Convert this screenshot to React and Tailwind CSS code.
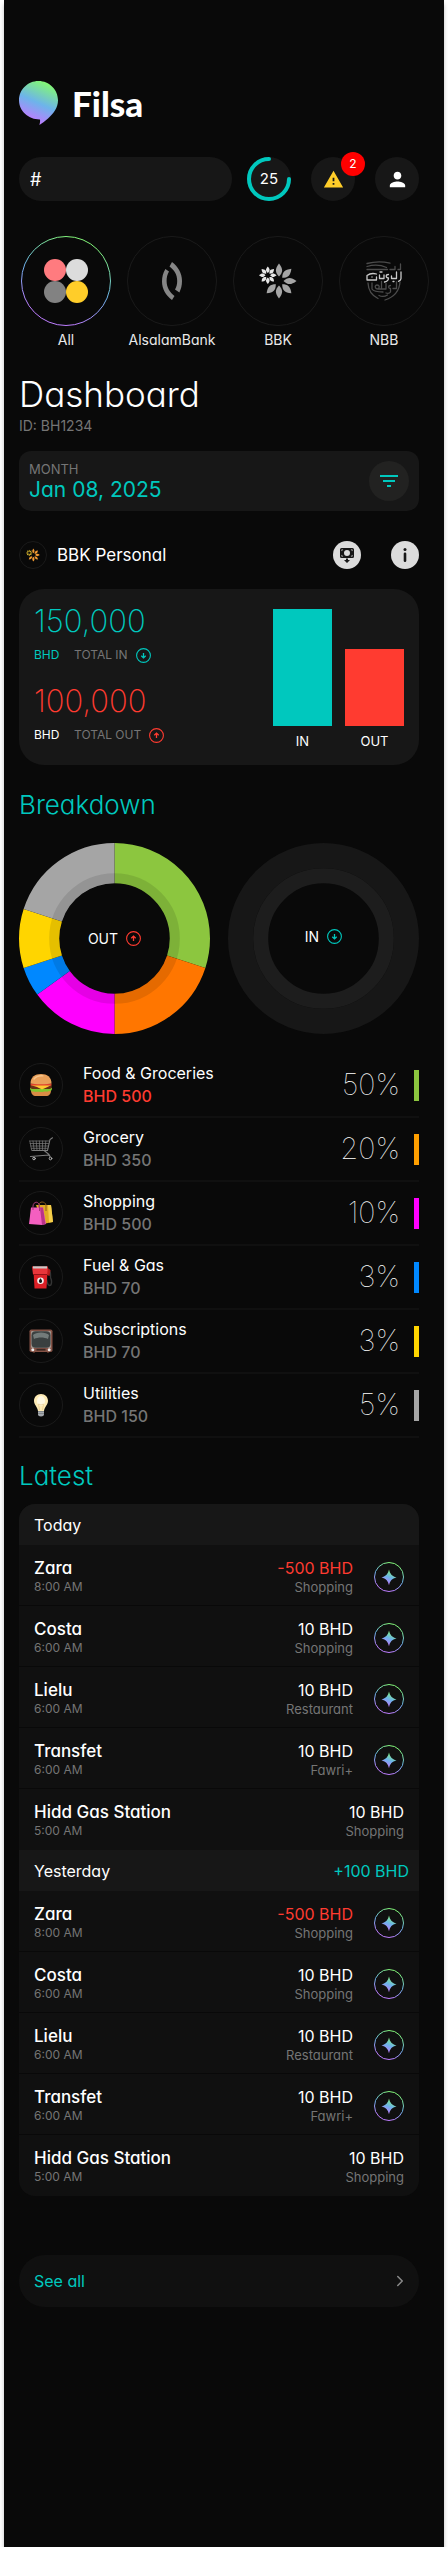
import React from 'react'
import { ChevronRight } from 'lucide-react'
import { MdPerson, MdFilterList, MdWarning } from 'react-icons/md'

const slices = [
  { color: '#8cc63f', start: 0, size: 30 },
  { color: '#ff7600', start: 30, size: 20 },
  { color: '#ff00ff', start: 50, size: 15 },
  { color: '#0088ff', start: 65, size: 5 },
  { color: '#ffd500', start: 70, size: 10 },
  { color: '#a5a5a5', start: 80, size: 20 },
]

const categories = [
  { name: 'Food & Groceries', amount: 'BHD 500', percent: '50%', bar: 'bg-[#8cc63f]', icon: BurgerIcon, over: true },
  { name: 'Grocery', amount: 'BHD 350', percent: '20%', bar: 'bg-[#ff9f00]', icon: CartIcon },
  { name: 'Shopping', amount: 'BHD 500', percent: '10%', bar: 'bg-[#ff00ff]', icon: BagsIcon },
  { name: 'Fuel & Gas', amount: 'BHD 70', percent: '3%', bar: 'bg-[#0088ff]', icon: FuelIcon },
  { name: 'Subscriptions', amount: 'BHD 70', percent: '3%', bar: 'bg-[#ffd500]', icon: TvIcon },
  { name: 'Utilities', amount: 'BHD 150', percent: '5%', bar: 'bg-[#a5a5a5]', icon: BulbIcon },
]

const transactions = [
  { name: 'Zara', time: '8:00 AM', amount: '-500 BHD', tag: 'Shopping', spent: true, ai: true },
  { name: 'Costa', time: '6:00 AM', amount: '10 BHD', tag: 'Shopping', ai: true },
  { name: 'Lielu', time: '6:00 AM', amount: '10 BHD', tag: 'Restaurant', ai: true },
  { name: 'Transfet', time: '6:00 AM', amount: '10 BHD', tag: 'Fawri+', ai: true },
  { name: 'Hidd Gas Station', time: '5:00 AM', amount: '10 BHD', tag: 'Shopping' },
]

const days = [
  { label: 'Today', total: '' },
  { label: 'Yesterday', total: '+100 BHD' },
]

/* Shared gradient used by the logo, the active bank and the sparkle buttons */
function Gradients() {
  return (
    <svg className="absolute size-0" aria-hidden="true">
      <defs>
        <linearGradient id="brand" x1="0.7" y1="0" x2="0.3" y2="1">
          <stop offset="0.05" stopColor="#82f578" />
          <stop offset="0.5" stopColor="#6db4ea" />
          <stop offset="0.9" stopColor="#bd7dff" />
        </linearGradient>
      </defs>
    </svg>
  )
}

function Logo() {
  return (
    <svg viewBox="0 0 39 44" className="w-[39px] h-11" aria-hidden="true">
      <path
        d="M19.500 0C30.300 0 39 8.600 39 19.300c0 7.200-4.400 13.400-10 18.200-2.700 2.400-5.600 4.700-8.600 6.500.5-1.900.9-3.800.6-5.500C10.300 38.700 0 30.800 0 19.300 0 8.600 8.700 0 19.500 0z"
        fill="url(#brand)"
      />
    </svg>
  )
}

function AllIcon() {
  return (
    <svg viewBox="0 0 44 44" className="size-11" aria-hidden="true">
      <circle cx="11" cy="11" r="11" fill="#ff7b7f" />
      <circle cx="33" cy="11" r="11" fill="#dcdcdc" />
      <circle cx="11" cy="33" r="11" fill="#828282" />
      <circle cx="33" cy="33" r="11" fill="#ffcd29" />
    </svg>
  )
}

function AlsalamIcon() {
  return (
    <svg viewBox="0 0 22 40" className="w-[22px] h-10" fill="#868686" aria-hidden="true">
      <path d="M11 1C17 5.500 21 12 21 20c0 4.500-1 8-2.600 11.500L14 28.500c1.500-2.600 2.200-5.300 2.200-8.500 0-6.500-2.800-10.600-7.700-14.500z" />
      <path d="M11 39C5 34.500 1 28 1 20.500c0-4.500 1-8.600 3.400-12.500L8 10.500c-1.700 2.900-2.400 6-2.400 9.500 0 6.500 3.100 11 7.900 15z" />
    </svg>
  )
}

function BbkIcon({ className, big, small }) {
  return (
    <svg viewBox="0 0 38 36" className={className} aria-hidden="true">
      <g fill={big}>
        {[0, 45, 90, 135, 180, 225].map((angle) => (
          <path key={angle} d="M0-17.500C4.300-12 4-8.500 0-4.500-4-8.500-4.300-12 0-17.500z" transform={`translate(20 18) rotate(${angle})`} />
        ))}
      </g>
      <g fill={small}>
        {[0, 45, 90, 135, 180, 225, 270, 315].map((angle) => (
          <path key={angle} d="M0-8.800C2.500-5.800 2.300-4.400 0-2.300-2.300-4.400-2.500-5.800 0-8.800z" transform={`translate(8.800 12.300) rotate(${angle})`} />
        ))}
      </g>
    </svg>
  )
}

function NbbIcon() {
  return (
    <svg viewBox="0 0 36 40" className="w-9 h-10" fill="none" strokeLinecap="round" strokeLinejoin="round" aria-hidden="true">
      <g stroke="#4c4c4c" strokeWidth="1.300">
        <path d="M1 2.500C9 .5 17 .6 24 2.200" />
        <path d="M1 8.500h20.500M1 5.500c7-2 14-1.500 19.500 1M24 8.500h5V5.500M34.500 3v5.500H32" />
        <path d="M2 22c.3 7.500 4 12.500 10 15.500M34 21c-.6 8.500-6 15-15 18" />
        <path d="M30.500 21v6.500H27M24.500 24.500c-2.500 0-2.500 3 0 3v3.500c-1 1.500-3 1.500-4.500 1" />
        <path d="M20 22.500v5.500h-8c-3.500 0-3.500-4-1-4s3 2.500 1 4M15.500 20.500v7.500M6 22v6c2 3 7 3 11 3" />
        <path d="M13 34.500c3 1.500 6 1 8.500-.5" />
      </g>
      <g stroke="#c9c9c9" strokeWidth="1.300">
        <path d="M35 11v6.500c0 1.800-1.200 2.300-2.500 2.800M30.500 11v6.500h-5v-2.500" />
        <path d="M22.500 13.500c-3 0-3 3.500 0 3.500 0 2-1.500 3.500-4 4M18 14v3.500h-4.500V14" />
        <path d="M10.500 13c-3.500-1-7.500 0-9.500 1.500V19h9.500v-3" />
        <path d="M6 15.800v.2M14 11h2M27 20.500h1" />
      </g>
    </svg>
  )
}

function BurgerIcon() {
  return (
    <svg viewBox="0 0 24 24" className="size-6" aria-hidden="true">
      <path d="M2 17h20c0 4-2 6-5 6H7c-3 0-5-2-5-6z" fill="#d98b45" />
      <path d="M1 15c1.500-1 3 .5 4.500 0s3 .8 5 .3 3 .6 5 0 3 .6 4.500-.3 2 0 3 0c.3 2.500-1.500 3.500-3 3-2 1.500-3.500 0-5 .6s-3 .7-5 .2-3 .7-5-.3c-2 .5-3.800-.5-4-3.500z" fill="#7ec62c" />
      <path d="M1.500 12.500h21c.8 2-.2 3.500-2 3.500h-17c-1.800 0-2.800-1.500-2-3.500z" fill="#6a2f16" />
      <path d="M1.500 12h21l-4.500 2.200-5 2.300-5-2.500z" fill="#ffc831" />
      <path d="M1.500 10.500h21v2h-21z" fill="#e0402f" />
      <path d="M1.500 10.500C1.500 4 6 1 12 1s10.500 3 10.500 9.500c-3 1-18 1-21 0z" fill="#e9a05a" />
      <path d="M5 6c2-2.800 5-3.500 9-3.200" stroke="#f6c48c" strokeWidth="1.300" fill="none" strokeLinecap="round" />
    </svg>
  )
}

function CartIcon() {
  return (
    <svg viewBox="0 0 24 24" className="size-6" fill="none" stroke="#7d7d7d" strokeLinecap="round" aria-hidden="true">
      <path d="M23.500.8 21 2.500l-2.500 11H3.500" strokeWidth="1.100" />
      <path d="M.8 4h19.400M1.200 6.500h18.300M1.800 9h17M2.300 11.300h16.200" strokeWidth="0.700" />
      <path d="M.8 4l1.900 9.500M4 4l1.200 9.500M7.200 4l.8 9.500M10.400 4l.3 9.500M13.600 4l-.2 9.500M16.800 4l-.8 9.500" strokeWidth="0.700" />
      <path d="M15 13.500c3 2 5 3 6 6M1.500 19.500 20 18" strokeWidth="1.200" />
      <circle cx="5" cy="21.500" r="1.300" stroke="#b5b5b5" />
      <circle cx="21.500" cy="21.500" r="1.300" stroke="#b5b5b5" />
    </svg>
  )
}

function BagsIcon() {
  return (
    <svg viewBox="0 0 24 24" className="size-6" aria-hidden="true">
      <path d="M7 4h15l2 17-10 2z" fill="#e0ac24" />
      <path d="M19 4h3l2 17-4 .5z" fill="#f5cf4a" />
      <path d="M10 7V4c0-4 6-4 7 0v6" stroke="#8a5b1e" strokeWidth="1" fill="none" />
      <path d="M2 6.500h12l3 16.500-4 1L0 23z" fill="#f45fc0" />
      <path d="M11 6.500h3l2.500 16.500-3.500 1z" fill="#b93489" />
      <path d="M4 9V5c.5-5 6-5 6.500 0v5" stroke="#a63a7a" strokeWidth="1" fill="none" />
    </svg>
  )
}

function FuelIcon() {
  return (
    <svg viewBox="0 0 24 24" className="size-6" aria-hidden="true">
      <path d="M19 3.500c3 2 2.500 6 2.500 9 1.500 3 1.500 8-1 8s-2-4-3-6" stroke="#343434" strokeWidth="1.400" fill="none" />
      <path d="M18 3l3.500 2-1 6-2.500-1z" fill="#b81c1c" />
      <path d="M4.500 6h14l-1 17.500H5.500z" fill="#dc2026" />
      <path d="M3 1.500h16l-1 8H4z" fill="#e8363b" />
      <path d="M4 1.300h14v2.200H4z" fill="#c9c9c9" />
      <path d="M4 9.500h14" stroke="#8d1014" strokeWidth="0.900" />
      <circle cx="11.500" cy="15.800" r="3.300" fill="#f1f1f1" />
      <path d="M11.500 13.300c1.200 1.600 1.600 2.200 1.600 3a1.600 1.600 0 0 1-3.200 0c0-.8.4-1.400 1.600-3z" fill="#171717" />
    </svg>
  )
}

function TvIcon() {
  return (
    <svg viewBox="0 0 24 24" className="size-6" aria-hidden="true">
      <path d="M3 21h3v3H4zM18 21h3l-1 3h-2z" fill="#4c2d24" />
      <rect x="0.500" y="0.500" width="23" height="22.500" rx="1.800" fill="#855346" />
      <rect x="2" y="2" width="20" height="17" rx="1" fill="#a3958e" />
      <rect x="2.500" y="2.300" width="19" height="16.400" rx="4" fill="#3a4040" />
      <path d="M4 6c3-3.500 13-3.500 16 0l-1 4C15 8 9 8 5 10z" fill="#737b7a" />
      <circle cx="3.800" cy="20.700" r="1.500" fill="#eee" />
      <circle cx="20.200" cy="20.700" r="1.500" fill="#eee" />
      <path d="M7.500 20.700h9" stroke="#3b2721" strokeWidth="1.800" />
    </svg>
  )
}

function BulbIcon() {
  return (
    <svg viewBox="0 0 24 24" className="size-6" aria-hidden="true">
      <path d="M9 17h6v4.500c0 1.200-1.300 2-3 2s-3-.8-3-2z" fill="#a4a8ad" />
      <path d="M9 18.500h6M9 20.500h6" stroke="#74787d" strokeWidth="0.700" />
      <path d="M12 1c4.200 0 7 3 7 6.800 0 4-3.500 6.200-4 10.200H9c-.5-4-4-6.200-4-10.200C5 4 7.800 1 12 1z" fill="#fdeab4" />
      <ellipse cx="12" cy="8" rx="4" ry="5" fill="#fff8e2" />
      <path d="M10.500 17l-1-6 2.500 1 2.500-1-1 6" stroke="#e6c98a" strokeWidth="0.700" fill="none" />
    </svg>
  )
}

function ArrowBadge({ down }) {
  return (
    <svg
      viewBox="0 0 15 15"
      className={down ? 'size-[15px] text-[#00c8be]' : 'size-[15px] text-[#ff3b30]'}
      fill="none"
      stroke="currentColor"
      aria-hidden="true"
    >
      <circle cx="7.500" cy="7.500" r="6.900" strokeWidth="1.100" />
      <path d={down ? 'M7.500 5v4.800M5.300 7.700l2.200 2.200 2.200-2.200' : 'M7.500 10V5.200M5.300 7.300l2.200-2.200 2.200 2.200'} strokeWidth="1.300" />
    </svg>
  )
}

function SparkleIcon() {
  return (
    <svg viewBox="0 0 30 30" className="size-[30px]" aria-hidden="true">
      <circle cx="15" cy="15" r="14.500" fill="none" stroke="url(#brand)" />
      <path d="M15 7.500c1 4.500 3 6.500 7.500 8-4.500 1.200-6.500 3.200-7.500 7.800-1-4.600-3-6.600-7.500-7.800 4.500-1.500 6.500-3.500 7.500-8z" fill="url(#brand)" />
    </svg>
  )
}

function WithdrawIcon() {
  return (
    <svg viewBox="0 0 14 15" className="w-3.5 h-[15px]" fill="#171717" aria-hidden="true">
      <path fillRule="evenodd" d="M1.500 0h11A1.500 1.500 0 0 1 14 1.500v7a1.500 1.500 0 0 1-1.500 1.500h-11A1.500 1.500 0 0 1 0 8.500v-7A1.500 1.500 0 0 1 1.500 0zM7 2a3 3 0 1 0 0 6 3 3 0 0 0 0-6zM1.500 1.500v1.800L3.300 1.500zM12.500 1.500h-1.800l1.800 1.800zM1.500 8.500h1.800L1.500 6.700zM12.500 8.500V6.700l-1.800 1.800z" />
      <path d="M6 10.500h2v1.500h2L7 15l-3-3h2z" />
    </svg>
  )
}

function Bank({ name, active, children }) {
  return (
    <button className="w-[90px] shrink-0 flex flex-col items-center gap-1">
      <span className="grid size-[90px] place-items-center">
        <svg viewBox="0 0 90 90" className="size-full [grid-area:1/1]" fill="none" aria-hidden="true">
          <circle cx="45" cy="45" r="44.500" stroke={active ? 'url(#brand)' : '#1a1a1a'} />
        </svg>
        <span className="[grid-area:1/1]">{children}</span>
      </span>
      <span className="text-sm leading-5 text-[#e8e8e8]">{name}</span>
    </button>
  )
}

function Transaction({ item, last }) {
  return (
    <li className={`flex items-center px-[15px] pt-[13px] pb-[9px] border-b ${last ? 'border-transparent' : 'border-[#090909]'}`}>
      <div className="flex-1">
        <p className="text-[17px] leading-5 font-medium">{item.name}</p>
        <p className="text-xs leading-[18px] text-[#757575]">{item.time}</p>
      </div>
      <div className="text-right">
        <p className={`text-base leading-5 ${item.spent ? 'text-[#ff3b30]' : ''}`}>{item.amount}</p>
        <p className="text-[13px] leading-[18px] text-[#757575]">{item.tag}</p>
      </div>
      {item.ai && (
        <button className="ml-[21px]" aria-label="Insights">
          <SparkleIcon />
        </button>
      )}
    </li>
  )
}

function App() {
  return (
    <div className="bg-white px-1 font-['Inter','Liberation_Sans',sans-serif] [font-feature-settings:'cv11']">
      <Gradients />
      <main className="bg-[#090909] text-white pt-[81px] pb-60 pl-[15px] pr-[25px] shadow-[0_4px_4px_rgba(0,0,0,0.25)] overflow-x-clip">
        <header className="flex items-center gap-3.5">
          <Logo />
          <span className="font-['Lato'] font-black text-[35px] leading-10">Filsa</span>
        </header>

        {/* Search and quick actions */}
        <div className="mt-8 flex items-center gap-5">
          <input
            type="text"
            aria-label="Search"
            placeholder="#"
            className="min-w-0 flex-1 h-11 -mr-[5px] rounded-full bg-[#171717] px-[11px] text-lg placeholder:text-white outline-none"
          />
          <button className="grid size-11 place-items-center rounded-full bg-[#171717]">
            <svg viewBox="0 0 44 44" className="size-11 [grid-area:1/1]" fill="none" aria-hidden="true">
              <path d="M22 2A20 20 0 1 0 42 22" stroke="#00c8be" strokeWidth="4" strokeLinecap="round" />
            </svg>
            <span className="[grid-area:1/1] text-[15px] leading-5">25</span>
          </button>
          <button className="relative grid size-11 place-items-center rounded-full bg-[#171717]" aria-label="Alerts">
            <MdWarning className="size-[21px] text-[#ffcd29]" />
            <span className="absolute -top-[5px] -right-2.5 grid size-6 place-items-center rounded-full bg-[#ff0000] text-xs">2</span>
          </button>
          <button className="grid size-11 place-items-center rounded-full bg-[#171717]" aria-label="Profile">
            <MdPerson className="size-[23px]" />
          </button>
        </div>

        {/* Banks */}
        <nav className="mt-[35px] ml-0.5 -mr-[25px] flex gap-4 overflow-hidden">
          <Bank name="All" active>
            <AllIcon />
          </Bank>
          <Bank name="AlsalamBank">
            <AlsalamIcon />
          </Bank>
          <Bank name="BBK">
            <BbkIcon className="w-[38px] h-9" big="#a5a5a5" small="#e6e6e6" />
          </Bank>
          <Bank name="NBB">
            <NbbIcon />
          </Bank>
        </nav>

        <h1 className="mt-6 text-[35px] leading-10 font-light">Dashboard</h1>
        <p className="mt-0.5 text-sm leading-5 text-[#757575]">ID: BH1234</p>

        {/* Month filter */}
        <div className="mt-[15px] flex h-[60px] items-center justify-between rounded-xl bg-[#171717] px-2.5">
          <div>
            <p className="text-[13px] leading-[18px] text-[#757575]">MONTH</p>
            <p className="text-[21px] leading-6 text-[#00c8be]">Jan 08, 2025</p>
          </div>
          <button className="grid size-10 place-items-center rounded-full bg-[#222221]" aria-label="Filter">
            <MdFilterList className="size-6 text-[#00c8be]" />
          </button>
        </div>

        {/* Account */}
        <div className="mt-[30px] flex items-center">
          <span className="grid size-7 place-items-center rounded-full border border-[#1a1a1a]">
            <BbkIcon className="size-3.5" big="#f39a32" small="#d8b72e" />
          </span>
          <h2 className="ml-2.5 flex-1 text-[17px] leading-6">BBK Personal</h2>
          <button className="grid size-7 place-items-center rounded-full bg-[#dcdcdc]" aria-label="Withdraw">
            <WithdrawIcon />
          </button>
          <button className="ml-[30px] grid size-7 place-items-center rounded-full bg-[#dcdcdc]" aria-label="Info">
            <svg viewBox="0 0 4 14" className="w-1 h-3.5" fill="#171717" aria-hidden="true">
              <circle cx="2" cy="1.500" r="1.500" />
              <rect x="0.700" y="4.500" width="2.600" height="9.500" rx="1.300" />
            </svg>
          </button>
        </div>

        <section className="mt-5 flex justify-between rounded-[25px] bg-[#171717] px-[15px]">
          <div className="pt-3 pb-[22px]">
            <p className="text-[31px] leading-10 font-extralight text-[#00c8be]">150,000</p>
            <div className="mt-1.5 flex items-center text-xs leading-4">
              <span className="w-10 text-[#00c8be]">BHD</span>
              <span className="mr-2 text-[#757575]">TOTAL IN</span>
              <ArrowBadge down />
            </div>
            <p className="mt-[18px] text-[31px] leading-10 font-extralight text-[#ff3b30]">100,000</p>
            <div className="mt-1.5 flex items-center text-xs leading-4">
              <span className="w-10">BHD</span>
              <span className="mr-2 text-[#757575]">TOTAL OUT</span>
              <ArrowBadge />
            </div>
          </div>
          <div className="flex items-end gap-[13px] pb-4 text-[13px] leading-4 text-center">
            <div>
              <div className="mb-[7px] h-[117px] w-[59px] bg-[#00c8be]" />
              IN
            </div>
            <div>
              <div className="mb-[7px] h-[77px] w-[59px] bg-[#ff3b30]" />
              OUT
            </div>
          </div>
        </section>

        {/* Breakdown */}
        <h2 className="mt-6 text-[26px] leading-8 font-light text-[#00c8be]">Breakdown</h2>
        <div className="mt-[22px] flex gap-[18px]">
          <div className="grid flex-1 place-items-center">
            <svg viewBox="0 0 190 190" className="w-full [grid-area:1/1]" fill="none" aria-hidden="true">
              <g transform="rotate(-90 95 95)">
                {slices.map((s) => (
                  <circle
                    key={s.color}
                    cx="95"
                    cy="95"
                    r="75"
                    stroke={s.color}
                    strokeWidth="40"
                    pathLength="100"
                    strokeDasharray={`${s.size} ${100 - s.size}`}
                    strokeDashoffset={-s.start}
                  />
                ))}
              </g>
              <circle cx="95" cy="95" r="60" stroke="#000" strokeOpacity="0.1" strokeWidth="10" />
            </svg>
            <p className="flex items-center gap-2 text-sm leading-5 [grid-area:1/1]">
              OUT <ArrowBadge />
            </p>
          </div>
          <div className="grid flex-1 place-items-center">
            <svg viewBox="0 0 190 190" className="w-full [grid-area:1/1]" fill="none" aria-hidden="true">
              <circle cx="95" cy="95" r="82.500" stroke="#171717" strokeWidth="25" />
              <circle cx="95" cy="95" r="62.500" stroke="#1d1d1d" strokeWidth="15" />
            </svg>
            <p className="flex items-center gap-2 pb-1 text-sm leading-5 [grid-area:1/1]">
              IN <ArrowBadge down />
            </p>
          </div>
        </div>

        <ul className="mt-5">
          {categories.map((c) => (
            <li key={c.name} className="flex items-center border-b-2 border-[#101010] py-2">
              <span className="grid size-11 place-items-center rounded-full border border-[#1a1a1a]">
                <c.icon />
              </span>
              <div className="ml-5 flex-1">
                <p className="text-base leading-[23px]">{c.name}</p>
                <p className={`text-base leading-[23px] font-medium ${c.over ? 'text-[#ff3b30]' : 'text-[#757575]'}`}>{c.amount}</p>
              </div>
              <span className="text-[29px] leading-10 font-thin">{c.percent}</span>
              <span className={`ml-3.5 h-[31px] w-[5px] ${c.bar}`} />
            </li>
          ))}
        </ul>

        {/* Latest transactions */}
        <h2 className="mt-[22px] text-[26px] leading-8 font-light text-[#00c8be]">Latest</h2>
        <section className="mt-3 overflow-hidden rounded-2xl bg-[#101010]">
          {days.map((day) => (
            <div key={day.label}>
              <div className="flex h-[41px] items-center justify-between bg-[#171717] pl-[15px] pr-2.5 text-base">
                <h3>{day.label}</h3>
                <span className="text-[#00c8be]">{day.total}</span>
              </div>
              <ul>
                {transactions.map((item, i) => (
                  <Transaction key={item.name} item={item} last={i === transactions.length - 1} />
                ))}
              </ul>
            </div>
          ))}
        </section>

        <a href="#all" className="mt-[59px] flex h-[52px] items-center justify-between rounded-full bg-[#101010] pl-[15px] pr-2.5 text-base text-[#00c8be]">
          See all
          <ChevronRight className="size-[18px] text-[#8a8a8a]" strokeWidth={2} />
        </a>
      </main>
    </div>
  )
}

export default App
